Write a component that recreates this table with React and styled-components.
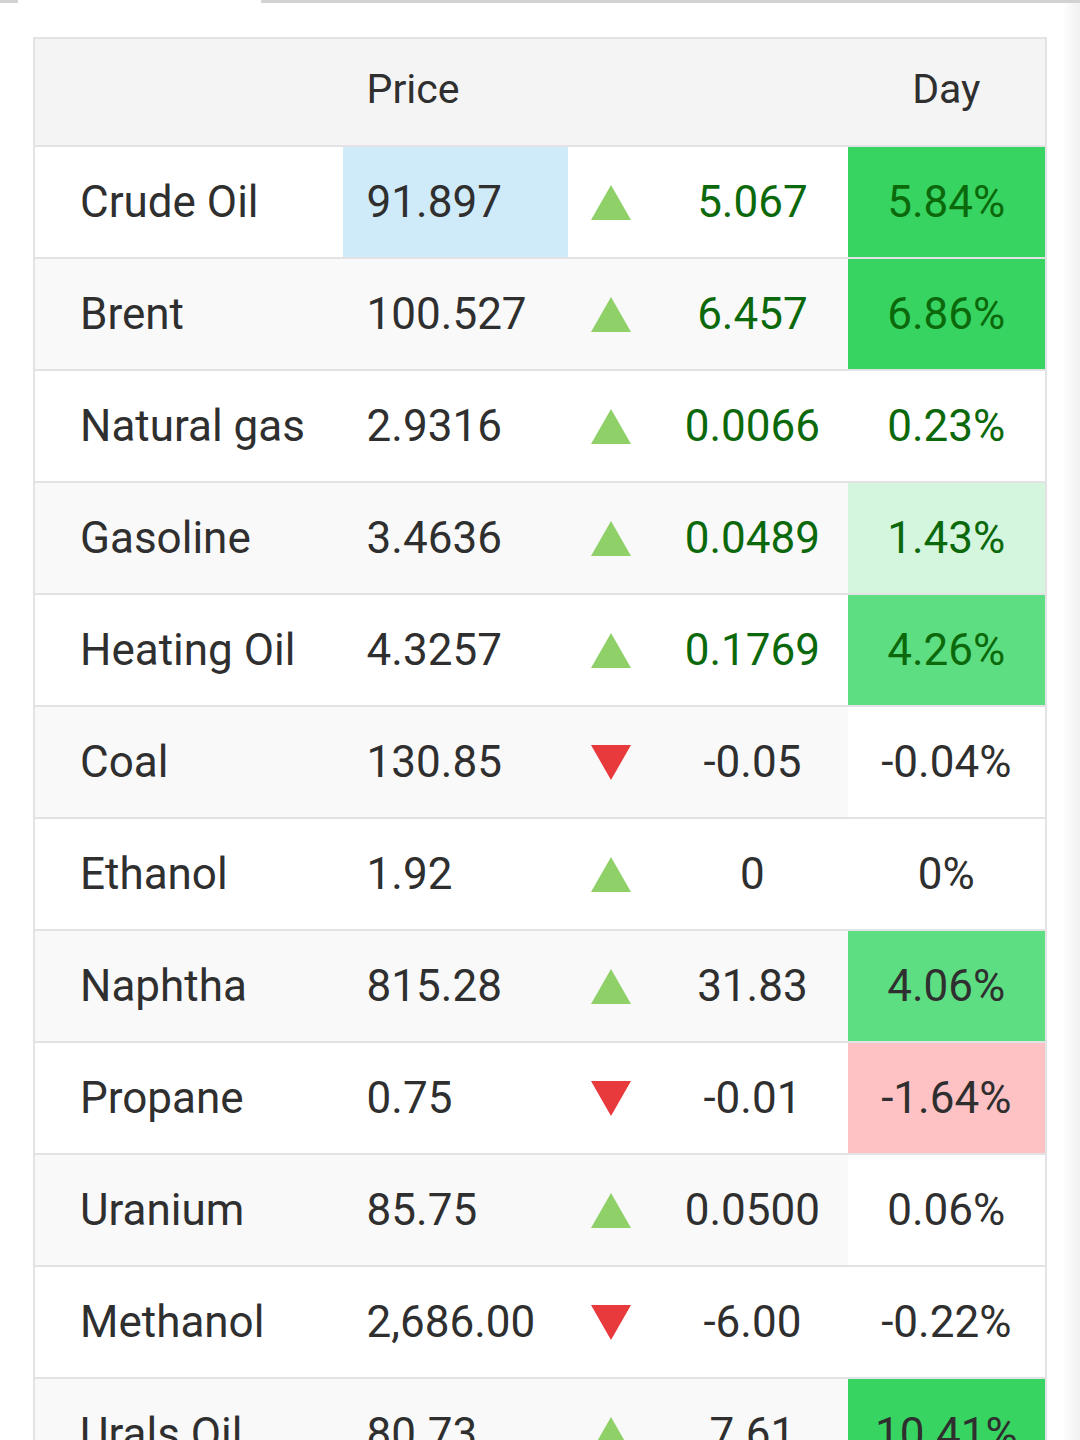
import styled, { createGlobalStyle } from 'styled-components'

const GlobalStyle = createGlobalStyle`
  body {
    margin: 0;
    background: #ffffff;
    font-family: Roboto, "Noto Sans", Arial, sans-serif;
    color: #2f2f2f;
  }
`;

const rows = [
  { name: "Crude Oil", price: "91.897", dir: "up", change: "5.067", pct: "5.84%", green: true, heat: "strong", flash: true },
  { name: "Brent", price: "100.527", dir: "up", change: "6.457", pct: "6.86%", green: true, heat: "strong" },
  { name: "Natural gas", price: "2.9316", dir: "up", change: "0.0066", pct: "0.23%", green: true, heat: "none" },
  { name: "Gasoline", price: "3.4636", dir: "up", change: "0.0489", pct: "1.43%", green: true, heat: "light" },
  { name: "Heating Oil", price: "4.3257", dir: "up", change: "0.1769", pct: "4.26%", green: true, heat: "medium" },
  { name: "Coal", price: "130.85", dir: "down", change: "-0.05", pct: "-0.04%", heat: "none" },
  { name: "Ethanol", price: "1.92", dir: "up", change: "0", pct: "0%", heat: "none" },
  { name: "Naphtha", price: "815.28", dir: "up", change: "31.83", pct: "4.06%", heat: "medium" },
  { name: "Propane", price: "0.75", dir: "down", change: "-0.01", pct: "-1.64%", heat: "red" },
  { name: "Uranium", price: "85.75", dir: "up", change: "0.0500", pct: "0.06%", heat: "none" },
  { name: "Methanol", price: "2,686.00", dir: "down", change: "-6.00", pct: "-0.22%", heat: "none" },
  { name: "Urals Oil", price: "80.73", dir: "up", change: "7.61", pct: "10.41%", heat: "strong" },
];

const heatColors = {
  strong: "#37d461",
  medium: "#5ede82",
  light: "#d5f6de",
  red: "#ffc2c4",
  none: "#ffffff",
};

const Arrow = ({ dir }) =>
  dir === "up" ? (
    <svg width="40" height="35" viewBox="0 0 40 35">
      <polygon points="20,0 40,35 0,35" fill="#8fd068" />
    </svg>
  ) : (
    <svg width="40" height="35" viewBox="0 0 40 35">
      <polygon points="0,0 40,0 20,35" fill="#e8393d" />
    </svg>
  );

const App = () => {
  return <>
    <GlobalStyle />
    <Page>
      <TabStrip>
        <TabEdge $side="left" />
        <TabGap />
        <TabEdge $side="right" />
      </TabStrip>
      <Body>
        <Content>
          <Table>
            <colgroup>
              <col style={{ width: 308 }} />
              <col style={{ width: 225 }} />
              <col style={{ width: 89 }} />
              <col style={{ width: 190 }} />
              <col style={{ width: 198 }} />
            </colgroup>
            <thead>
              <HeadRow>
                <HeadCell />
                <HeadCell $align="left">Price</HeadCell>
                <HeadCell />
                <HeadCell />
                <HeadCell $align="center">Day</HeadCell>
              </HeadRow>
            </thead>
            <tbody>
              {rows.map((r, i) => (
                <Row key={r.name} $striped={i % 2 === 1}>
                  <NameCell>{r.name}</NameCell>
                  <PriceCell $flash={r.flash}>{r.price}</PriceCell>
                  <ArrowCell><Arrow dir={r.dir} /></ArrowCell>
                  <ChangeCell $green={r.green}>{r.change}</ChangeCell>
                  <PctCell $green={r.green} $heat={r.heat}>{r.pct}</PctCell>
                </Row>
              ))}
            </tbody>
          </Table>
        </Content>
        <Shade />
      </Body>
    </Page>
  </>
};

export default App;

const Page = styled.div`
  display: flex;
  flex-direction: column;
  width: 1080px;
  min-height: 1440px;
`;

const TabStrip = styled.div`
  display: flex;
  height: 3px;
`;

const TabEdge = styled.div`
  flex: ${({ $side }) => ($side === "left" ? "0 0 17px" : "1")};
  border-bottom: 3px solid #d2d2d2;
  ${({ $side }) => ($side === "left" ? "border-right: 1px solid #d8d8d8;" : "border-left: 1px solid #d8d8d8;")}
  margin-top: -3px;
  height: 3px;
`;

const TabGap = styled.div`
  flex: 0 0 243px;
`;

const Body = styled.div`
  display: flex;
  flex: 1;
`;

const Content = styled.div`
  flex: 1;
  padding: 34px 15px 0 33px;
`;

const Shade = styled.div`
  flex: 0 0 18px;
  background: linear-gradient(to right, #ffffff, #f1f1f1);
`;

const Table = styled.table`
  width: 1014px;
  table-layout: fixed;
  border-collapse: collapse;
  border: 2px solid #e3e3e5;
  font-size: 44px;
  line-height: 1;
`;

const HeadRow = styled.tr`
  height: 108px;
  background: #f4f4f4;
  border-bottom: 2px solid #e3e3e5;
`;

const HeadCell = styled.th`
  font-weight: 400;
  font-size: 41px;
  color: #2f2f2f;
  text-align: ${({ $align }) => $align || "left"};
  padding: 0 0 6px 24px;
  vertical-align: middle;
  ${({ $align }) => $align === "center" && "padding-left: 0;"}
`;

const Row = styled.tr`
  height: 112px;
  background: ${({ $striped }) => ($striped ? "#f9f9f9" : "#ffffff")};
  border-bottom: 2px solid #e3e3e5;
`;

const Cell = styled.td`
  padding: 0;
  vertical-align: middle;
  white-space: nowrap;
`;

const NameCell = styled(Cell)`
  padding-left: 45px;
`;

const PriceCell = styled(Cell)`
  padding-left: 24px;
  background: ${({ $flash }) => ($flash ? "#cfeaf8" : "transparent")};
`;

const ArrowCell = styled(Cell)`
  text-align: center;
  line-height: 0;
  padding-right: 4px;
`;

const ChangeCell = styled(Cell)`
  text-align: center;
  color: ${({ $green }) => ($green ? "#0b690b" : "#2f2f2f")};
`;

const PctCell = styled(Cell)`
  text-align: center;
  background: ${({ $heat }) => heatColors[$heat]};
  color: ${({ $green }) => ($green ? "#0b690b" : "#2f2f2f")};
`;
